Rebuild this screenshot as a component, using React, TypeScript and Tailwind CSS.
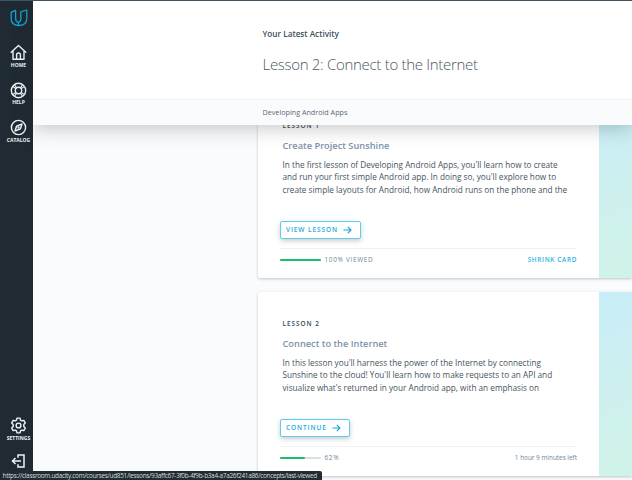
import React from "react";

type Lesson = {
  label: string;
  title: string;
  lines: string[];
  action: string;
  actionWidth: string;
  progress: number;
  progressLabel: string;
  aside: React.ReactNode;
};

const lessons: Lesson[] = [
  {
    label: "LESSON 1",
    title: "Create Project Sunshine",
    lines: [
      "In the first lesson of Developing Android Apps, you'll learn how to create",
      "and run your first simple Android app. In doing so, you'll explore how to",
      "create simple layouts for Android, how Android runs on the phone and the",
    ],
    action: "VIEW LESSON",
    actionWidth: "w-[81px]",
    progress: 100,
    progressLabel: "100% VIEWED",
    aside: <span className="text-[6.4px] font-semibold tracking-[0.65px] text-[#2fb0de]">SHRINK CARD</span>,
  },
  {
    label: "LESSON 2",
    title: "Connect to the Internet",
    lines: [
      "In this lesson you'll harness the power of the Internet by connecting",
      "Sunshine to the cloud! You'll learn how to make requests to an API and",
      "visualize what's returned in your Android app, with an emphasis on",
    ],
    action: "CONTINUE",
    actionWidth: "w-[70px]",
    progress: 62,
    progressLabel: "62%",
    aside: <span className="text-[6.4px] text-[#6f869c]">1 hour 9 minutes left</span>,
  },
];

function Logo() {
  return (
    <svg width="18" height="18" viewBox="0 0 18 18" fill="none" stroke="#12a5d3" strokeWidth="1.3" strokeLinejoin="round">
      <path d="M1.200 3.200 5.600 1.300v7.900c0 2.300.9 3.700 2.800 4.100v3.200C4 16.200 1.200 13.800 1.200 9.800Z" />
      <path d="M8.400 13.300c1.500-.4 2.400-1.600 2.400-3.500V2.900L16.800 1v8.800c0 4.200-2.800 6.700-8.400 6.700" />
    </svg>
  );
}

function HomeIcon() {
  return (
    <svg width="17" height="17" viewBox="0 0 17 17" fill="none" stroke="#eef3f5" strokeWidth="1.4" strokeLinejoin="round" strokeLinecap="round">
      <path d="M1.200 8.300 8.500 1.500l7.300 6.800M3 7v8.200h11V7M6.600 15v-4.200c0-1.100.8-1.800 1.900-1.800s1.900.7 1.900 1.800V15" />
    </svg>
  );
}

function HelpIcon() {
  return (
    <svg width="17" height="17" viewBox="0 0 17 17" fill="none" stroke="#eef3f5" strokeWidth="1.400">
      <circle cx="8.500" cy="8.500" r="7.200" />
      <circle cx="8.500" cy="8.500" r="3.200" />
      <path d="m2.800 4.500 3.100 2.100M4.500 2.800l2.100 3.100M12.500 2.800l-2.100 3.100M14.200 4.500l-3.100 2.100M2.800 12.500l3.100-2.100M4.500 14.200l2.100-3.100M12.500 14.200l-2.100-3.100M14.200 12.500l-3.100-2.100" strokeWidth="1.100" />
    </svg>
  );
}

function CompassIcon() {
  return (
    <svg width="17" height="17" viewBox="0 0 17 17" fill="none" stroke="#eef3f5" strokeWidth="1.400" strokeLinejoin="round">
      <circle cx="8.500" cy="8.500" r="7.100" />
      <path d="m12 5-1.500 4.800L5 12l1.500-4.800Z" />
      <circle cx="8.500" cy="8.500" r=".5" />
    </svg>
  );
}

function GearIcon() {
  return (
    <svg width="17" height="17" viewBox="0 0 17 17" fill="none" stroke="#eef3f5" strokeWidth="1.400" strokeLinejoin="round">
      <path d="M7 1.100h3l.5 2 1.300.8 2-.6 1.500 2.600-1.500 1.500v2.200l1.500 1.500-1.500 2.600-2-.6-1.300.8-.5 2H7l-.5-2-1.300-.8-2 .6-1.500-2.600 1.500-1.500V7.400L1.700 5.900l1.500-2.600 2 .6 1.300-.8Z" />
      <circle cx="8.500" cy="8.500" r="2.400" />
    </svg>
  );
}

function ExitIcon() {
  return (
    <svg width="15" height="14" viewBox="0 0 15 14" fill="none" stroke="#eef3f5" strokeWidth="1.500">
      <path d="M7 3.700V1h6v12H7v-2.700M10 7H1.500M4.500 4l-3 3 3 3" />
    </svg>
  );
}

function NavItem({ icon, label }: { icon: React.ReactNode; label: string }) {
  return (
    <a className="flex h-[37.5px] flex-col items-center">
      {icon}
      <span className="mt-[0.5px] text-[5px] leading-[6px] font-bold whitespace-nowrap text-[#eef3f5]">{label}</span>
    </a>
  );
}

function Sidebar() {
  return (
    <nav className="flex w-[33px] shrink-0 flex-col items-center bg-[#1f2a32] pl-[4px]">
      <div className="mt-[8px] h-[35px]">
        <Logo />
      </div>
      <NavItem icon={<HomeIcon />} label="HOME" />
      <NavItem icon={<HelpIcon />} label="HELP" />
      <NavItem icon={<CompassIcon />} label="CATALOG" />
      <div className="mt-auto flex h-[63px] flex-col items-center">
        <NavItem icon={<GearIcon />} label="SETTINGS" />
        <div className="-mt-[1px]">
          <ExitIcon />
        </div>
      </div>
    </nav>
  );
}

function LessonCard({ lesson }: { lesson: Lesson }) {
  return (
    <article className="flex h-[184px] shrink-0 overflow-hidden rounded-l-[3px] bg-white shadow-[0_1px_3px_rgba(40,55,65,0.28)]">
      <div className="flex w-[341px] shrink-0 flex-col pr-[22px] pl-[22px]">
        <div className="pl-[2.5px]">
          <div className="mt-[27px] text-[6.4px] leading-[10px] font-semibold tracking-[1px] text-[#37454f]">{lesson.label}</div>
          <h2 className="mt-[8px] text-[9.25px] leading-[14px] font-semibold text-[#7c93aa]">{lesson.title}</h2>
          <div className="mt-[6px] text-[8.21px] leading-[12.3px] whitespace-nowrap text-[#45545e]">
            {lesson.lines.map((line) => (
              <p key={line}>{line}</p>
            ))}
          </div>
        </div>
        <button className={`mt-[25px] flex h-[18px] shrink-0 items-center justify-between rounded-[2px] border border-[#5fcdea] bg-white pr-[8px] pl-[5px] shadow-[0_2px_5px_rgba(40,60,75,0.25)] ${lesson.actionWidth}`}>
          <span className="text-[6.5px] font-semibold tracking-[0.9px] whitespace-nowrap text-[#1fa9da]">{lesson.action}</span>
          <svg width="9" height="8" viewBox="0 0 9 8" fill="none" stroke="#19a9dc" strokeWidth="1.2">
            <path d="M.5 4h7.300M4.800.800 8 4 4.800 7.200" />
          </svg>
        </button>
        <div className="mt-[9px] flex items-center border-t border-[#f1f2f3] pt-[5px]">
          <div className="h-[2px] w-[41px] rounded-full bg-[#d8dfe8]">
            <div className="h-full rounded-full bg-[#17be6b]" style={{ width: `${lesson.progress}%` }} />
          </div>
          <span className="ml-[3.5px] flex-1 text-[6.4px] leading-[12px] tracking-[0.7px] text-[#6f869c]">{lesson.progressLabel}</span>
          {lesson.aside}
        </div>
      </div>
      <div className="flex-1 bg-[linear-gradient(155deg,#c8edf8_0%,#cdf0ef_50%,#cff3e8_100%)]" />
    </article>
  );
}

export default function App() {
  return (
    <div className="relative flex h-[480px] w-[632px] overflow-hidden border-t border-[#41535e] bg-[#fafbfd] font-['Open_Sans',sans-serif]">
      <Sidebar />
      <main className="flex min-w-0 flex-1 flex-col">
        <header className="relative z-10 shrink-0 bg-white shadow-[0_3px_18px_rgba(30,40,50,0.26)]">
          <div className="h-[98px] pt-[27px] pl-[229.5px]">
            <p className="text-[8.2px] leading-[12px] font-semibold text-[#3e4d59]">Your Latest Activity</p>
            <h1 className="mt-[12.5px] text-[15px] leading-[22px] font-light tracking-[-0.3px] text-[#4b5862]">Lesson 2: Connect to the Internet</h1>
          </div>
          <div className="h-[26px] border-t border-[#eff1f3] bg-[#fafbfd] pt-[6px] pl-[229.5px] text-[7.2px] leading-[12px] text-[#5c6974]">
            Developing Android Apps
          </div>
        </header>
        <section className="min-h-0 flex-1 overflow-hidden pl-[225px]">
          <div className="-mt-[31px] flex flex-col gap-[14px]">
            {lessons.map((lesson) => (
              <LessonCard key={lesson.label} lesson={lesson} />
            ))}
          </div>
        </section>
      </main>
      <div className="absolute bottom-0 left-0 z-20 h-[9px] w-[322px] rounded-tr-[2px] bg-[#202b32] pl-[2.5px] text-[6.4px] leading-[9px] tracking-[-0.285px] whitespace-nowrap text-[#d7dddf]">
        https://classroom.udacity.com/courses/ud851/lessons/93affc67-3f0b-4f9b-b3a4-a7a26f241a86/concepts/last-viewed
      </div>
    </div>
  );
}
